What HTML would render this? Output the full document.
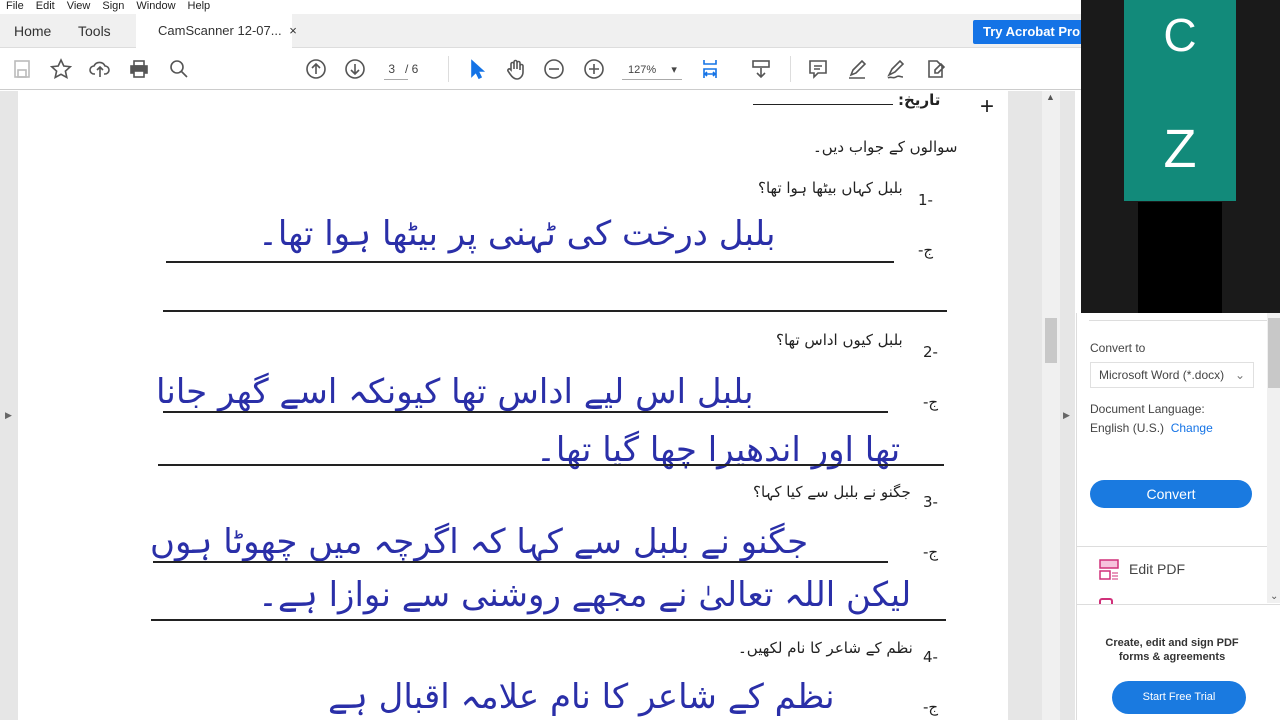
<!DOCTYPE html>
<html><head><meta charset="utf-8"><style>
*{margin:0;padding:0;box-sizing:border-box}
body{width:1280px;height:720px;overflow:hidden;position:relative;background:#fff;font-family:"Liberation Sans",sans-serif;}
.abs{position:absolute}
.menu{top:0;left:0;width:1081px;height:14px;background:#fff;font-size:11px;color:#222}
.menu span{margin-left:6px;margin-right:6px}
.tabs{top:14px;left:0;width:1081px;height:34px;background:#f0f0f0;border-bottom:1px solid #ddd}
.tab{top:0;height:34px;line-height:34px;font-size:14px;color:#333}
.tool{top:48px;left:0;width:1081px;height:42px;background:#fff;border-bottom:1px solid #ccc}
svg.i{position:absolute;top:58px;width:22px;height:22px;fill:none;stroke:#555;stroke-width:1.6}
.doc{top:91px;left:0;width:1075px;height:629px;background:#e6e6e6}
.page{top:91px;left:18px;width:990px;height:629px;background:#fff}
.line{position:absolute;height:2px;background:#222}
.ur{position:absolute;font-family:"DejaVu Sans",sans-serif;color:#222;direction:rtl;font-size:15px}
.hw{position:absolute;font-family:"DejaVu Sans",sans-serif;color:#2a2fa8;direction:rtl;font-size:34px;white-space:nowrap}
.side{top:313px;left:1076px;width:204px;height:407px;background:#fff;border-left:1px solid #ddd}
</style></head><body>
<div class="abs menu"><span>File</span><span>Edit</span><span>View</span><span>Sign</span><span>Window</span><span>Help</span></div>
<div class="abs tabs">
<div class="abs tab" style="left:14px">Home</div>
<div class="abs tab" style="left:78px">Tools</div>
<div class="abs" style="left:136px;top:0;width:156px;height:35px;background:#fff"></div>
<div class="abs tab" style="left:158px;font-size:13px">CamScanner 12-07... <span style="margin-left:4px">×</span></div>
<div class="abs" style="left:973px;top:6px;width:110px;height:24px;background:#1473e6;color:#fff;font-weight:bold;font-size:13px;line-height:24px;padding-left:10px;border-radius:2px">Try Acrobat Pro</div>
</div>
<div class="abs tool"></div>
<svg class="i" style="left:11px" viewBox="0 0 22 22"><rect x="4" y="3" width="14" height="16" stroke="#bbb"/><rect x="7" y="12" width="8" height="7" stroke="#bbb"/></svg>
<svg class="i" style="left:50px" viewBox="0 0 22 22"><path d="M11 2l2.8 6 6.5.7-4.9 4.4 1.4 6.4L11 16.3 5.2 19.5l1.4-6.4L1.7 8.7 8.2 8z"/></svg>
<svg class="i" style="left:89px" viewBox="0 0 22 22"><path d="M6 16H5a4 4 0 010-8 6 6 0 0111 0 4 4 0 010 8h-1M11 19V9M8 12l3-3 3 3"/></svg>
<svg class="i" style="left:128px" viewBox="0 0 22 22"><rect x="3" y="8" width="16" height="7" fill="#555"/><rect x="6" y="3" width="10" height="5"/><rect x="6" y="13" width="10" height="6" fill="#fff"/></svg>
<svg class="i" style="left:168px" viewBox="0 0 22 22"><circle cx="9" cy="9" r="6"/><path d="M13.5 13.5L19 19"/></svg>
<svg class="i" style="left:305px" viewBox="0 0 22 22"><circle cx="11" cy="11" r="9"/><path d="M11 16V6M7 10l4-4 4 4"/></svg>
<svg class="i" style="left:344px" viewBox="0 0 22 22"><circle cx="11" cy="11" r="9"/><path d="M11 6v10M7 12l4 4 4-4"/></svg>
<div class="abs" style="left:385px;top:62px;font-size:12px;color:#444">&nbsp;3&nbsp;&nbsp;&nbsp;/ 6</div>
<div class="abs" style="left:384px;top:79px;width:24px;height:1px;background:#aaa"></div>
<div class="abs" style="left:448px;top:56px;width:1px;height:26px;background:#ddd"></div>
<svg class="i" style="left:466px" viewBox="0 0 22 22"><path d="M6 3v15l4-4 3 6 2-1-3-6h5z" fill="#1473e6" stroke="#1473e6"/></svg>
<svg class="i" style="left:505px" viewBox="0 0 22 22"><path d="M6 12V6a1.5 1.5 0 013 0v5V4a1.5 1.5 0 013 0v7V5a1.5 1.5 0 013 0v7V8a1.5 1.5 0 013 0v6c0 4-3 7-6 7s-5-2-7-5l-2-3a1.5 1.5 0 012-2z"/></svg>
<svg class="i" style="left:543px" viewBox="0 0 22 22"><circle cx="11" cy="11" r="9"/><path d="M6 11h10"/></svg>
<svg class="i" style="left:583px" viewBox="0 0 22 22"><circle cx="11" cy="11" r="9"/><path d="M6 11h10M11 6v10"/></svg>
<div class="abs" style="left:628px;top:63px;font-size:11px;color:#444">127%&nbsp;&nbsp;&nbsp;&nbsp;&nbsp;▾</div>
<div class="abs" style="left:622px;top:79px;width:60px;height:1px;background:#aaa"></div>
<svg class="i" style="left:700px" viewBox="0 0 22 22"><path d="M4 2v4h12V2M4 20v-9h12v9M6 16h8M7 14l-2 2 2 2M13 14l2 2-2 2" stroke="#1473e6"/></svg>
<svg class="i" style="left:750px" viewBox="0 0 22 22"><rect x="3" y="3" width="16" height="6"/><path d="M11 10v9M7 15l4 4 4-4"/></svg>
<div class="abs" style="left:790px;top:56px;width:1px;height:26px;background:#ddd"></div>
<svg class="i" style="left:807px" viewBox="0 0 22 22"><path d="M3 3h16v12h-8l-4 4v-4H3z"/><path d="M7 8h8M7 11h6"/></svg>
<svg class="i" style="left:846px" viewBox="0 0 22 22"><path d="M5 17l2-5 9-9 3 3-9 9zM3 20h16" /></svg>
<svg class="i" style="left:885px" viewBox="0 0 22 22"><path d="M4 17l3-6 8-8 3 3-8 8zM3 20c3-2 5 1 8-1s4 0 7 0"/></svg>
<svg class="i" style="left:925px" viewBox="0 0 22 22"><path d="M4 3h8l5 5v11H4zM10 12l6-6 3 3-6 6h-3z"/></svg>

<div class="abs doc"></div>
<div class="abs page">
<div class="line" style="left:735px;top:13px;width:140px;height:1px"></div>
<div class="ur" style="left:880px;top:0;font-weight:bold">تاریخ:</div>
<div class="ur" style="left:795px;top:47px">سوالوں کے جواب دیں۔</div>
<div class="ur" style="left:740px;top:88px">بلبل کہاں بیٹھا ہوا تھا؟</div>
<div class="ur" style="left:900px;top:100px">-1</div>
<div class="ur" style="left:900px;top:150px">ج-</div>
<div class="hw" style="left:240px;top:122px">بلبل درخت کی ٹہنی پر بیٹھا ہوا تھا۔</div>
<div class="line" style="left:148px;top:170px;width:728px"></div>
<div class="line" style="left:145px;top:219px;width:784px"></div>
<div class="ur" style="left:758px;top:240px">بلبل کیوں اداس تھا؟</div>
<div class="ur" style="left:905px;top:252px">-2</div>
<div class="ur" style="left:905px;top:302px">ج-</div>
<div class="hw" style="left:138px;top:280px">بلبل اس لیے اداس تھا کیونکہ اسے گھر جانا</div>
<div class="line" style="left:145px;top:320px;width:725px"></div>
<div class="hw" style="left:518px;top:338px">تھا اور اندھیرا چھا گیا تھا۔</div>
<div class="line" style="left:140px;top:373px;width:786px"></div>
<div class="ur" style="left:735px;top:392px">جگنو نے بلبل سے کیا کہا؟</div>
<div class="ur" style="left:905px;top:402px">-3</div>
<div class="ur" style="left:905px;top:452px">ج-</div>
<div class="hw" style="left:132px;top:430px">جگنو نے بلبل سے کہا کہ اگرچہ میں چھوٹا ہوں</div>
<div class="line" style="left:135px;top:470px;width:735px"></div>
<div class="hw" style="left:240px;top:483px">لیکن اللہ تعالیٰ نے مجھے روشنی سے نوازا ہے۔</div>
<div class="line" style="left:133px;top:528px;width:795px"></div>
<div class="ur" style="left:720px;top:548px">نظم کے شاعر کا نام لکھیں۔</div>
<div class="ur" style="left:905px;top:557px">-4</div>
<div class="ur" style="left:905px;top:607px">ج-</div>
<div class="hw" style="left:310px;top:585px">نظم کے شاعر کا نام علامہ اقبال ہے</div>
<div class="abs" style="left:962px;top:2px;font-size:24px;color:#222">+</div>
</div>
<div class="abs" style="left:1042px;top:91px;width:18px;height:629px;background:#f0f0f0"></div>
<div class="abs" style="left:1045px;top:318px;width:12px;height:45px;background:#c8c8c8"></div>
<div class="abs" style="left:1046px;top:92px;font-size:9px;color:#555">▲</div>
<div class="abs" style="left:5px;top:410px;font-size:9px;color:#666">▶</div>
<div class="abs" style="left:1063px;top:410px;font-size:9px;color:#666">▶</div>

<div class="abs side">
<div class="abs" style="left:12px;top:0;width:178px;height:8px;border-bottom:1px solid #ddd"></div>
<div class="abs" style="left:13px;top:28px;font-size:12px;color:#444">Convert to</div>
<div class="abs" style="left:13px;top:49px;width:164px;height:26px;border:1px solid #e0e0e0;font-size:12px;color:#444;line-height:24px;padding-left:8px">Microsoft Word (*.docx)<span style="position:absolute;right:8px;color:#777">⌄</span></div>
<div class="abs" style="left:13px;top:89px;font-size:12px;color:#444">Document Language:</div>
<div class="abs" style="left:13px;top:108px;font-size:12px;color:#444">English (U.S.)&nbsp; <span style="color:#1473e6">Change</span></div>
<div class="abs" style="left:13px;top:167px;width:162px;height:28px;border-radius:14px;background:#1a7ae0;color:#fff;font-size:14px;text-align:center;line-height:28px">Convert</div>
<div class="abs" style="left:0;top:233px;width:190px;height:1px;background:#ddd"></div>
<svg class="abs" style="left:22px;top:246px" width="22" height="22" viewBox="0 0 22 22"><rect x="1" y="1" width="18" height="8" fill="#f6c2dc" stroke="#d0307a" stroke-width="1.5"/><rect x="1" y="12" width="10" height="8" fill="none" stroke="#d0307a" stroke-width="1.5"/><path d="M13 14h6M13 17h6M13 20h6" stroke="#d0307a"/></svg>
<div class="abs" style="left:52px;top:248px;font-size:14px;color:#444">Edit PDF</div>
<div class="abs" style="left:22px;top:285px;width:14px;height:6px;border:2px solid #d0307a;border-bottom:none;border-radius:3px 3px 0 0"></div>
<div class="abs" style="left:190px;top:0;width:14px;height:290px;background:#f0f0f0"></div>
<div class="abs" style="left:191px;top:5px;width:12px;height:70px;background:#c8c8c8"></div>
<div class="abs" style="left:193px;top:278px;font-size:10px;color:#555">⌄</div>
<div class="abs" style="left:0;top:291px;width:204px;height:116px;background:#fff;border-top:1px solid #ddd"></div>
<div class="abs" style="left:0;top:323px;width:190px;text-align:center;font-size:11px;font-weight:bold;color:#333;line-height:14px">Create, edit and sign PDF<br>forms &amp; agreements</div>
<div class="abs" style="left:35px;top:368px;width:134px;height:33px;border-radius:17px;background:#1a7ae0;color:#fff;font-size:11px;text-align:center;line-height:33px">Start Free Trial</div>
</div>

<div class="abs" style="left:1081px;top:0;width:199px;height:313px;background:#1a1a1a"></div>
<div class="abs" style="left:1138px;top:202px;width:84px;height:111px;background:#000"></div>
<div class="abs" style="left:1124px;top:0;width:112px;height:201px;background:#128a7a"></div>
<div class="abs" style="left:1124px;top:8px;width:112px;text-align:center;color:#fff;font-size:46px">C</div>
<div class="abs" style="left:1124px;top:118px;width:112px;text-align:center;color:#fff;font-size:54px">Z</div>
</body></html>
